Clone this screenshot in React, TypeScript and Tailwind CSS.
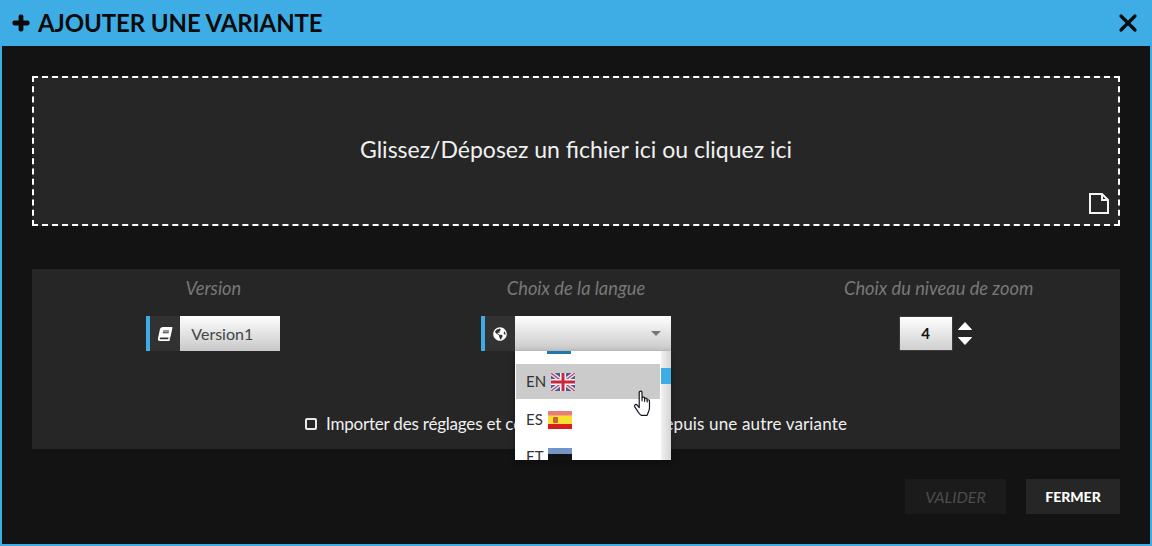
import { X } from 'lucide-react';
import { FaBook, FaGlobeAmericas, FaPlus } from 'react-icons/fa';

const FlagUK = () => (
  <svg width="24" height="18" viewBox="0 0 24 18" className="shrink-0">
    <rect width="24" height="18" fill="#4a5a9c" />
    <path d="M0 0L24 18M24 0L0 18" stroke="#e8e8f0" strokeWidth="4" />
    <path d="M0 0L24 18M24 0L0 18" stroke="#c8485c" strokeWidth="1.4" />
    <path d="M12 0V18M0 9H24" stroke="#f2f0f4" strokeWidth="6" />
    <path d="M12 0V18M0 9H24" stroke="#c8283c" strokeWidth="3" />
  </svg>
);

const FlagES = () => (
  <svg width="24" height="18" viewBox="0 0 24 18" className="shrink-0">
    <rect width="24" height="18" fill="#f8e030" />
    <rect width="24" height="4.5" fill="#e87c7c" />
    <rect y="13" width="24" height="5" fill="#d81e1e" />
    <rect x="5" y="6" width="5" height="6" rx="1" fill="#c8603c" />
  </svg>
);

const FlagET = () => (
  <svg width="24" height="18" viewBox="0 0 24 18" className="shrink-0">
    <rect width="24" height="6" fill="#7096c8" />
    <rect y="6" width="24" height="6" fill="#111111" />
    <rect y="12" width="24" height="6" fill="#eeeeee" />
  </svg>
);

// pointeur main au-dessus de la liste
const HandCursor = () => (
  <svg width="20" height="27" viewBox="0 0 18 25" className="absolute left-[148px] top-[74px]">
    <path
      d="M5.5 2.2c0-1.6 2.6-1.6 2.6 0V10V7.6c0-1.4 2.4-1.4 2.4 0V10.5V8.6c0-1.4 2.3-1.4 2.3 0v2.4V10c0-1.3 2.2-1.3 2.2 0v6.5c0 2.2-.8 3.2-1.4 4.8-.3 1-.6 2.2-.9 2.2H7.6c-1.2 0-2-1.6-3-3L1.4 15.6c-1-1.6 1-3 2.2-1.6l1.9 2.2Z"
      fill="#ffffff"
      stroke="#15151f"
      strokeWidth="1.1"
      strokeLinejoin="round"
    />
  </svg>
);

const fieldLabel = 'text-[18.3px] italic text-[#787878] text-center leading-[20px] -mt-px mb-px';

const App = () => {
  return (
    <div className="h-[546px] w-[1152px] overflow-hidden border-x-2 border-b-2 border-[#3eade6] bg-[#131313] font-['Lato',sans-serif] text-white">
      {/* Header */}
      <header className="-mx-[2px] flex h-[46px] items-center justify-between bg-[#3eade6] pl-[12px] pr-[10px] text-[#0b0b0b]">
        <div className="flex items-center gap-[8px]">
          <FaPlus size={18} stroke="currentColor" strokeWidth={40} />
          <h1 className="text-[24px] font-bold leading-none tracking-[-0.1px]">AJOUTER UNE VARIANTE</h1>
        </div>
        <X size={28} strokeWidth={2.8} />
      </header>

      <div className="px-[30px] pt-[30px]">
        {/* Dropzone */}
        <div className="relative flex h-[150px] items-center justify-center border-2 border-dashed border-white bg-[#262626] pb-[3px]">
          <p className="text-[23px] text-[#f0f0f0]">Glissez/Déposez un fichier ici ou cliquez ici</p>
          <svg width="20" height="21" viewBox="0 0 20 21" fill="none" stroke="#f4f4f4" strokeWidth="2" className="absolute bottom-[10px] right-[9px]">
            <path d="M1 1H13L19 7V20H1Z M13 1V7H19" />
          </svg>
        </div>

        {/* Options */}
        <div className="mt-[43px] h-[180px] bg-[#262626] pt-[10px]">
          <div className="grid grid-cols-3">
            <div className="flex flex-col items-center gap-[17px]">
              <span className={fieldLabel}>Version</span>
              <div className="flex h-[35px] w-[134px] border-l-4 border-[#3eade6]">
                <div className="flex w-[30px] items-center justify-center bg-[#323232]">
                  <FaBook size={14} className="-skew-x-12 text-white" />
                </div>
                <div className="flex flex-1 items-center bg-gradient-to-b from-white to-[#c8c8c8] pl-[11px] text-[16px] text-[#444444]">
                  Version1
                </div>
              </div>
            </div>

            <div className="flex flex-col items-center gap-[17px]">
              <span className={fieldLabel}>Choix de la langue</span>
              <div className="relative z-10 flex h-[35px] w-[190px] border-l-4 border-[#3eade6]">
                <div className="flex w-[30px] items-center justify-center bg-[#323232]">
                  <FaGlobeAmericas size={14} className="text-white" />
                </div>
                <div className="flex flex-1 items-center justify-end bg-gradient-to-b from-white to-[#c8c8c8] pr-[10px]">
                  <span className="h-0 w-0 border-x-[5px] border-t-[5px] border-x-transparent border-t-[#777777]" />
                </div>

                {/* Liste ouverte */}
                <div className="absolute left-[30px] top-[35px] flex h-[109px] w-[156px] overflow-hidden bg-white shadow-[0_2px_6px_rgba(0,0,0,0.35)]">
                  <div className="w-[146px] pl-px text-[15px] text-[#333333]">
                    <div className="flex h-[13px] items-start pl-[31px]">
                      <div className="h-[3px] w-[24px] bg-[#1f77ad]" />
                    </div>
                    <div className="flex h-[35px] w-[144px] items-center gap-[5px] bg-[#cbcbcb] pl-[10px]">
                      EN
                      <FlagUK />
                    </div>
                    <div className="mt-[2px] flex h-[37px] items-center gap-[5px] pl-[10px]">
                      ES
                      <FlagES />
                    </div>
                    <div className="flex h-[37px] items-center gap-[4px] pl-[10px]">
                      ET
                      <FlagET />
                    </div>
                  </div>
                  <div className="flex-1 bg-gradient-to-r from-[#f2f2f2] to-[#d4d4d4] pt-[17px]">
                    <div className="h-[16px] bg-[#3eade6]" />
                  </div>
                </div>
                <HandCursor />
              </div>
            </div>

            <div className="flex flex-col items-center gap-[17px]">
              <span className={fieldLabel}>Choix du niveau de zoom</span>
              <div className="flex h-[35px] items-center gap-[5px] pr-[7px]">
                <div className="flex h-[35px] w-[54px] items-center justify-center border border-[#3a3a3a] bg-gradient-to-b from-white to-[#cfcfcf] text-[15px] font-bold text-[#111111]">
                  4
                </div>
                <div className="flex flex-col gap-[7px]">
                  <svg width="14" height="8" viewBox="0 0 14 8">
                    <path d="M7 0.5L13.5 7.5H0.5Z" fill="#ffffff" stroke="#ffffff" strokeLinejoin="round" />
                  </svg>
                  <svg width="14" height="8" viewBox="0 0 14 8">
                    <path d="M0.5 0.5H13.5L7 7.5Z" fill="#ffffff" stroke="#ffffff" strokeLinejoin="round" />
                  </svg>
                </div>
              </div>
            </div>
          </div>

          {/* la partie centrale passe sous la liste ouverte */}
          <label className="mt-[63px] flex items-center justify-center gap-[9px] text-[17px] leading-[20px] text-[#f0f0f0]">
            <span className="h-[12px] w-[12px] rounded-[2px] border-2 border-[#e8e8e8]" />
            <span className="tracking-[-0.2px]">
              Importer des réglages et c
              <span className="tracking-[2.6px]">onfigurations d</span>
              <span className="tracking-[0.15px]">epuis une autre variante</span>
            </span>
          </label>
        </div>

        {/* Actions */}
        <div className="mt-[30px] flex justify-end gap-[20px]">
          <button className="h-[35px] w-[101px] bg-[#1b1b1b] text-[16px] italic text-[#4c4c4c]">VALIDER</button>
          <button className="h-[35px] w-[94px] bg-[#262626] text-[14px] font-black text-white">FERMER</button>
        </div>
      </div>
    </div>
  );
};

export default App;
